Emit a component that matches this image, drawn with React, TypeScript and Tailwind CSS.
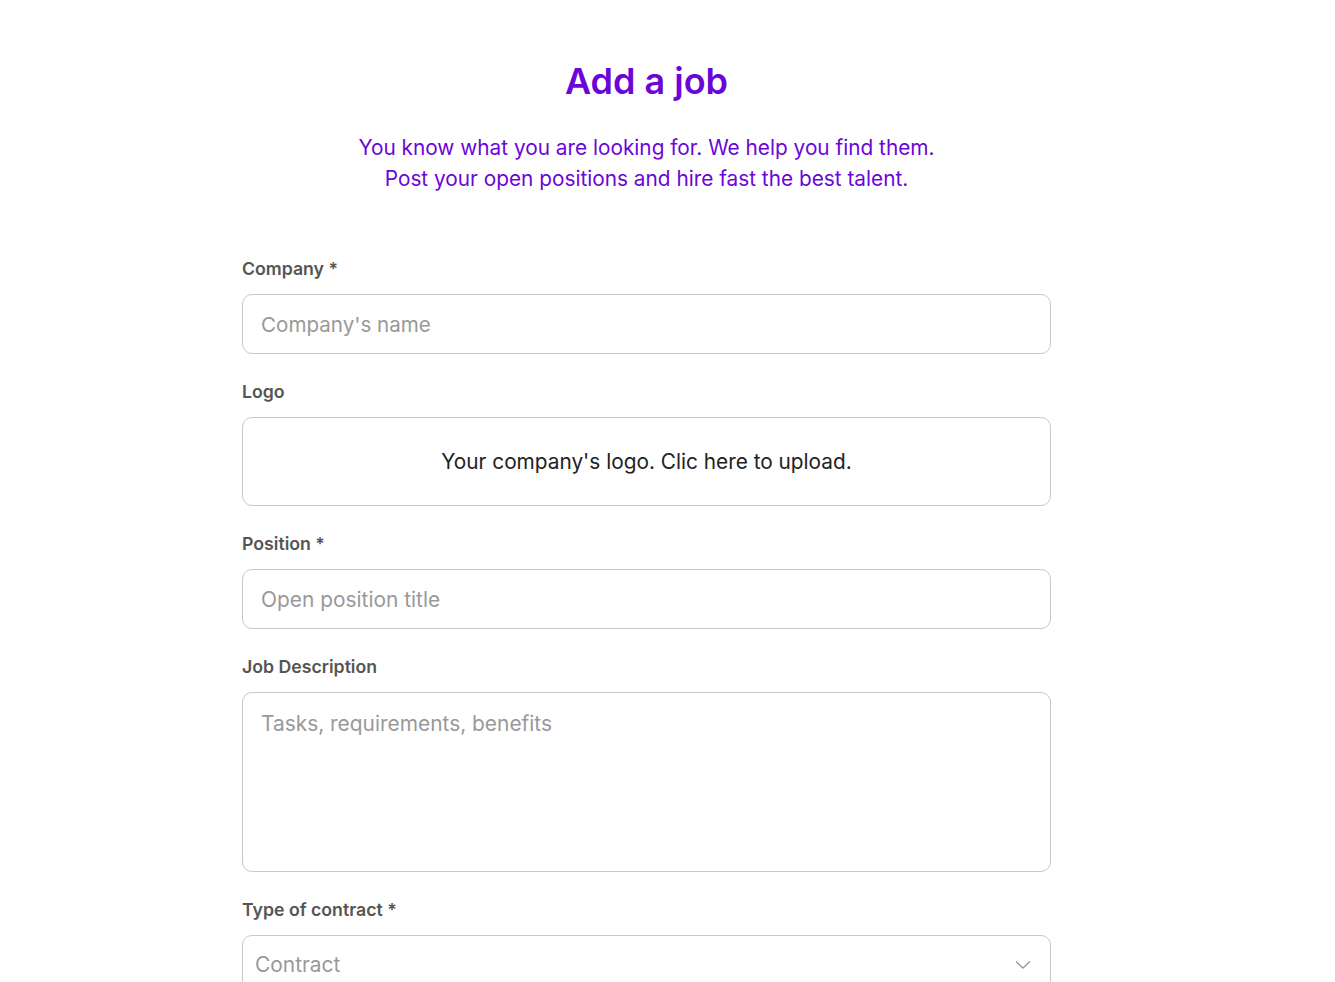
import { useState } from "react";

export default function App() {
  const [company, setCompany] = useState("");
  const [position, setPosition] = useState("");
  const [description, setDescription] = useState("");
  const [contract, setContract] = useState("");

  return (
    <div className="min-h-screen bg-white" style={{ fontFamily: "Inter, 'Noto Sans', sans-serif" }}>
      <div className="ml-[242px] w-[809px] pt-[59px] pb-10">
        <h1 className="text-center text-[36px] leading-[44px] font-semibold text-[#6a06d8]">Add a job</h1>
        <p className="mt-[29px] text-center text-[20.8px] leading-[31px] text-[#6a06d8]">
          You know what you are looking for. We help you find them.
          <br />
          Post your open positions and hire fast the best talent.
        </p>

        <form className="mt-[63px] flex flex-col gap-[26px]">
          {/* Company */}
          <div>
            <label className="block mb-[13px] text-[17.7px] leading-[24px] font-semibold text-[#555]">Company *</label>
            <input
              type="text"
              value={company}
              onChange={(e) => setCompany(e.target.value)}
              placeholder="Company's name"
              className="w-full h-[60px] px-[18px] rounded-[10px] border border-[#c8c8c8] text-[20.6px] text-[#222] placeholder:text-[#999] outline-none"
            />
          </div>

          {/* Logo */}
          <div>
            <label className="block mb-[13px] text-[17.7px] leading-[24px] font-semibold text-[#555]">Logo</label>
            <div className="flex h-[89px] items-center justify-center rounded-[10px] border border-[#c8c8c8] text-[20.8px] text-[#222] cursor-pointer">
              Your company's logo. Clic here to upload.
            </div>
          </div>

          {/* Position */}
          <div>
            <label className="block mb-[13px] text-[17.7px] leading-[24px] font-semibold text-[#555]">Position *</label>
            <input
              type="text"
              value={position}
              onChange={(e) => setPosition(e.target.value)}
              placeholder="Open position title"
              className="w-full h-[60px] px-[18px] rounded-[10px] border border-[#c8c8c8] text-[20.9px] text-[#222] placeholder:text-[#999] outline-none"
            />
          </div>

          {/* Job description */}
          <div>
            <label className="block mb-[13px] text-[17.7px] leading-[24px] font-semibold text-[#555]">Job Description</label>
            <textarea
              value={description}
              onChange={(e) => setDescription(e.target.value)}
              placeholder="Tasks, requirements, benefits"
              className="block w-full h-[180px] px-[18px] py-[17px] rounded-[10px] border border-[#c8c8c8] text-[20.9px] leading-[28px] text-[#222] placeholder:text-[#999] outline-none resize-none"
            />
          </div>

          {/* Contract */}
          <div>
            <label className="block mb-[13px] text-[17.7px] leading-[24px] font-semibold text-[#555]">Type of contract *</label>
            <div className="relative">
              <select
                value={contract}
                onChange={(e) => setContract(e.target.value)}
                className="w-full h-[60px] pl-[12px] pr-10 rounded-[10px] border border-[#c8c8c8] text-[20.9px] text-[#999] bg-white appearance-none outline-none"
              >
                <option value="">Contract</option>
                <option value="full">Full-time</option>
                <option value="part">Part-time</option>
                <option value="freelance">Freelance</option>
              </select>
              <svg
                className="pointer-events-none absolute right-[20px] top-[25px]"
                width="16"
                height="10"
                viewBox="0 0 16 10"
                fill="none"
                stroke="#999"
                strokeWidth="1.3"
              >
                <polyline points="1,1.5 8,8 15,1.5" />
              </svg>
            </div>
          </div>
        </form>
      </div>
    </div>
  );
}
